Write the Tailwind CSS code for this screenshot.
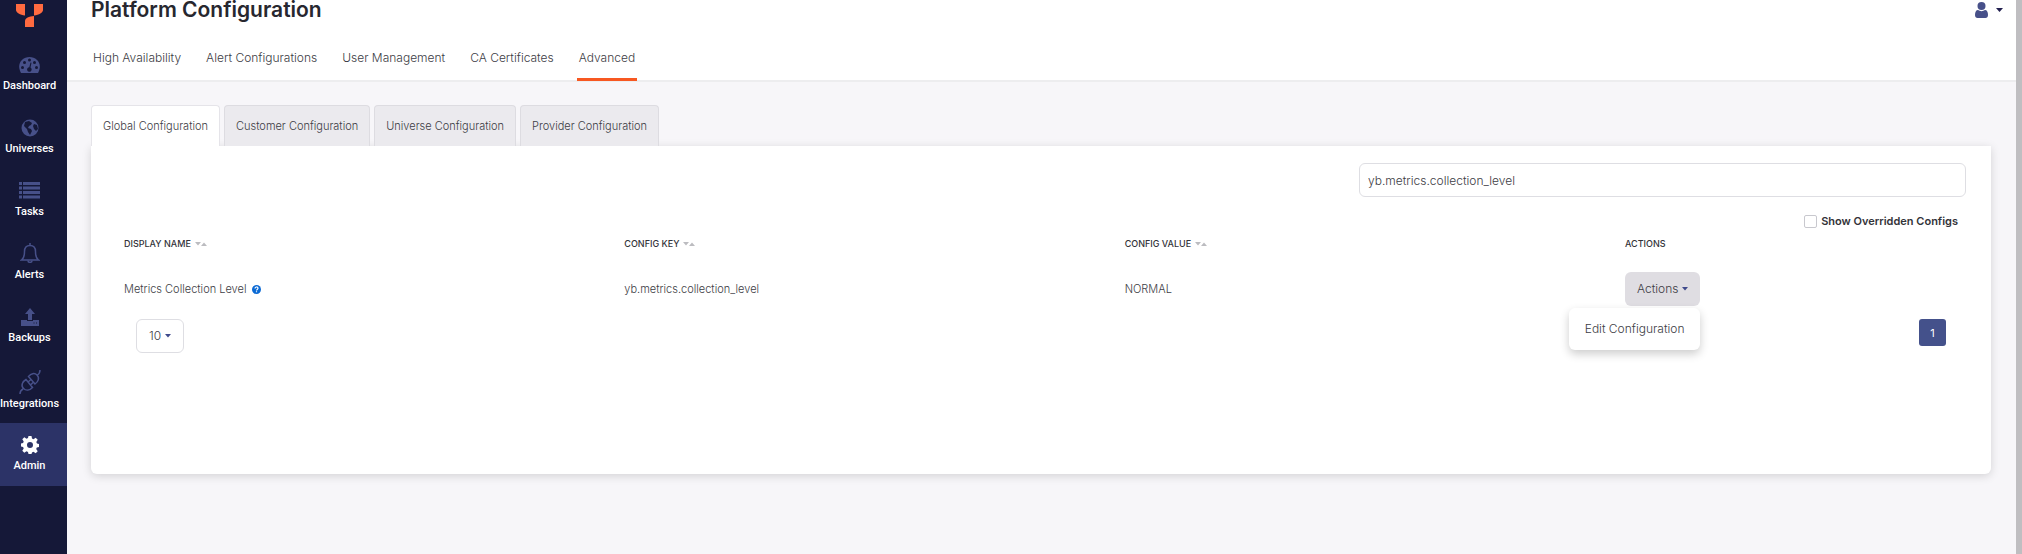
<!DOCTYPE html>
<html lang="en">

<head>
    <meta charset="UTF-8">
    <meta name="viewport" content="width=device-width, initial-scale=1.0">
    <title>Platform Configuration</title>
    <script src="https://cdn.jsdelivr.net/npm/@tailwindcss/browser@4"></script>
</head>

<body class="flex min-h-screen bg-[#f7f6f9] font-['Inter',sans-serif] text-[12px] leading-4 font-light text-[#3c3c44]">
    <!-- Sidebar -->
    <aside class="w-[67px] shrink-0 bg-[#151838] font-['Roboto',sans-serif] text-[11px] font-medium text-white">
        <a href="#" aria-label="Home" class="flex h-[43px] w-[59px] justify-center pt-1">
            <svg class="h-[23px] w-[27px]" viewBox="0 0 27 23" fill="#ff6a40">
                <path d="M0 0h9v11.500C4 11 0 8.500 0 6z" />
                <path d="M18 0h9v6c0 2.500-4 5-9 5.500z" />
                <path d="M18 12v11H9v-6c0-3 4-4.500 9-5z" />
            </svg>
        </a>
        <nav>
            <a href="#" class="flex h-[63px] flex-col pt-[13px]">
                <span class="flex w-[59px] flex-col items-center gap-1">
                    <svg class="h-[18px] w-[21px]" viewBox="0 0 21 18" fill="#475089">
                        <path d="M2 17C-3 8 3 1 10.500 1S24 8 19 17z" />
                        <g fill="#151838">
                            <circle cx="3.500" cy="11.500" r="1.500" />
                            <circle cx="5.500" cy="6.500" r="1.500" />
                            <circle cx="10.500" cy="4" r="1.500" />
                            <circle cx="15.500" cy="6.500" r="1.500" />
                            <circle cx="17.500" cy="11.500" r="1.500" />
                            <path d="M11.500 6.500l1 .3-1 4.700a2.300 2.300 0 1 1-1.200-.3z" />
                        </g>
                    </svg>
                    <span>Dashboard</span>
                </span>
            </a>
            <a href="#" class="flex h-[63px] flex-col pt-[13px]">
                <span class="flex w-[59px] flex-col items-center gap-1">
                    <svg class="size-[18px]" viewBox="0 0 18 18">
                        <circle cx="9" cy="9" r="8.500" fill="#475089" />
                        <path d="M4 3l4-1 3 2-1 2-2 1-1 2 3 1 1 2-2 4-2-3-1-3-3-3zM13 5l3 1 1 4-2 2-2-2-1-3z" fill="#151838" />
                    </svg>
                    <span>Universes</span>
                </span>
            </a>
            <a href="#" class="flex h-[63px] flex-col pt-[13px]">
                <span class="flex w-[59px] flex-col items-center gap-1">
                    <svg class="h-[18px] w-[21px]" viewBox="0 0 21 18" fill="#475089">
                        <path d="M0 0h3v3H0zM4 0h17v3H4zM0 4.500h3v3H0zM4 4.500h17v3H4zM0 9h3v3H0zM4 9h17v3H4zM0 13.500h3v3H0zM4 13.500h17v3H4z" />
                    </svg>
                    <span>Tasks</span>
                </span>
            </a>
            <a href="#" class="flex h-[63px] flex-col pt-[11px]">
                <span class="flex w-[59px] flex-col items-center gap-1">
                    <svg class="size-5" viewBox="0 0 20 20" fill="none" stroke="#475089" stroke-width="1.500">
                        <path d="M10 0v2M1.500 17c3-2 3-5 3-8.500C4.500 4.500 7 2.500 10 2.500s5.500 2 5.500 6c0 3.500 0 6.500 3 8.500z" />
                        <path d="M8 17.500c0 2.500 4 2.500 4 0" />
                    </svg>
                    <span>Alerts</span>
                </span>
            </a>
            <a href="#" class="flex h-[63px] flex-col pt-[13px]">
                <span class="flex w-[59px] flex-col items-center gap-1">
                    <svg class="size-[18px]" viewBox="0 0 18 18" fill="#475089">
                        <path d="M9 0l5 6h-3v6H7V6H4z" />
                        <path fill-rule="evenodd" d="M0 12h6v1h6v-1h6v6H0zM12.500 14.500v1h1v-1zM15 14.500v1h1v-1z" />
                    </svg>
                    <span>Backups</span>
                </span>
            </a>
            <a href="#" class="flex h-[65px] flex-col pt-3">
                <span class="flex w-[59px] flex-col items-center gap-[2px]">
                    <svg class="h-6 w-[22px]" viewBox="0 0 22 24" fill="none" stroke="#475089" stroke-width="1.500">
                        <path d="M1 24c0-3 1-4 3-5M4.500 18.500c-3-3-1-7 2.500-9l6.500 8c-3 3-6.500 3.500-9 1zM21 0c0 3-1 4-2.500 5M18 5c3 3 1 7-2 9L9.500 6.500c2.500-3 6-4 8.500-1.500zM9 12l3-2.500M11.500 15l2.500-2.500" />
                    </svg>
                    <span>Integrations</span>
                </span>
            </a>
            <a href="#" aria-current="page" class="flex h-[63px] flex-col bg-[#2c3367] pt-[13px]">
                <span class="flex w-[59px] flex-col items-center gap-1">
                    <svg class="size-[18px]" viewBox="0 0 18 18">
                        <path fill="#fff" fill-rule="evenodd" d="M7.500 0h3l.5 2.500 1.500.7 2.200-1.400 2 2-1.400 2.200.7 1.500 2 .5v3l-2.200.5-.6 1.500 1.500 2.200-2 2-2.300-1.400-1.400.6L10.500 18h-3L7 15.900l-1.500-.6-2.200 1.400-2-2 1.400-2.200-.6-1.500L0 10.500v-3L2.100 7l.6-1.500-1.400-2.200 2-2 2.200 1.400L7 2.100zM9 6a3 3 0 1 0 0 6 3 3 0 0 0 0-6z" />
                    </svg>
                    <span>Admin</span>
                </span>
            </a>
        </nav>
    </aside>

    <div class="min-w-0 flex-1">
        <header class="border-b-2 border-[#ededef] bg-white pr-[13px] pl-6">
            <div class="flex h-5 items-center justify-between">
                <h1 class="text-[21px] leading-5 font-semibold text-[#27272f]">Platform Configuration</h1>
                <button type="button" aria-label="Account" class="flex items-center gap-2">
                    <svg class="h-4 w-[13px]" viewBox="0 0 13 16" fill="#475089">
                        <circle cx="6.500" cy="4" r="4" />
                        <path d="M3 8c2 1.500 5 1.500 7 0 2 0 3 2 3 5 0 2-1 3-2.500 3h-8C1 16 0 15 0 13c0-3 1-5 3-5z" />
                    </svg>
                    <svg class="h-1 w-[7px]" viewBox="0 0 7 4" fill="#22204f"><path d="M0 0h7L3.500 4z" /></svg>
                </button>
            </div>
            <nav class="-mb-px flex gap-[21px] pt-[30px]">
                <a href="#" class="border-b-[3px] border-transparent px-[2px] pb-3">High Availability</a>
                <a href="#" class="border-b-[3px] border-transparent px-[2px] pb-3">Alert Configurations</a>
                <a href="#" class="border-b-[3px] border-transparent px-[2px] pb-3">User Management</a>
                <a href="#" class="border-b-[3px] border-transparent px-[2px] pb-3">CA Certificates</a>
                <a href="#" aria-current="page" class="border-b-[3px] border-[#f75821] px-[2px] pb-3">Advanced</a>
            </nav>
        </header>

        <main class="pt-[23px] pr-[25px] pb-6 pl-6">
            <div role="tablist" class="flex gap-1 text-[11px]">
                <button type="button" role="tab" aria-selected="true" class="h-[41px] rounded-t border border-b-0 border-[#e5e4e9] bg-white px-[11px]">Global Configuration</button>
                <button type="button" role="tab" aria-selected="false" class="h-[41px] rounded-t border border-b-0 border-[#dddce1] bg-[#ebeaee] px-[11px]">Customer Configuration</button>
                <button type="button" role="tab" aria-selected="false" class="h-[41px] rounded-t border border-b-0 border-[#dddce1] bg-[#ebeaee] px-[11px]">Universe Configuration</button>
                <button type="button" role="tab" aria-selected="false" class="h-[41px] rounded-t border border-b-0 border-[#dddce1] bg-[#ebeaee] px-[11px]">Provider Configuration</button>
            </div>

            <section class="min-h-[328px] rounded-b-md bg-white px-[25px] pt-[17px] shadow-[0_2px_10px_rgba(0,0,0,0.15)]">
                <div class="flex justify-end">
                    <input type="text" aria-label="Search" value="yb.metrics.collection_level" class="h-[34px] w-[607px] rounded-md border border-[#dedee3] bg-white px-2 text-[12px]">
                </div>
                <div class="mt-4 flex justify-end pr-2">
                    <label class="flex items-center gap-1 text-[11px] font-semibold text-[#333339]">
                        <input type="checkbox" class="size-[13px] appearance-none rounded-xs border border-[#c8c8ce] bg-white">
                        Show Overridden Configs
                    </label>
                </div>

                <table class="w-full table-fixed text-left text-[11px]">
                    <thead>
                        <tr class="h-[30px] text-[9px] text-[#333339]">
                            <th class="px-2 font-medium">
                                <span class="flex items-center gap-1">DISPLAY NAME
                                    <svg class="h-1 w-3" viewBox="0 0 12 4" fill="#bcbcc0"><path d="M0 0h6L3 3.500zM6 4h6L9 .5z" /></svg>
                                </span>
                            </th>
                            <th class="px-2 font-medium">
                                <span class="flex items-center gap-1">CONFIG KEY
                                    <svg class="h-1 w-3" viewBox="0 0 12 4" fill="#bcbcc0"><path d="M0 0h6L3 3.500zM6 4h6L9 .5z" /></svg>
                                </span>
                            </th>
                            <th class="px-2 font-medium">
                                <span class="flex items-center gap-1">CONFIG VALUE
                                    <svg class="h-1 w-3" viewBox="0 0 12 4" fill="#bcbcc0"><path d="M0 0h6L3 3.500zM6 4h6L9 .5z" /></svg>
                                </span>
                            </th>
                            <th class="w-[349px] px-2 font-medium">ACTIONS</th>
                        </tr>
                    </thead>
                    <tbody>
                        <tr class="h-[60px]">
                            <td class="px-2">
                                <span class="flex items-center gap-[6px]">Metrics Collection Level
                                    <svg class="size-[9px]" viewBox="0 0 9 9" fill="none">
                                        <circle cx="4.500" cy="4.500" r="4.500" fill="#0a69d4" />
                                        <path d="M3 3.500c0-2 3-2 3-.2C6 4.500 4.500 4.300 4.500 5.500M4.500 6.300v1" stroke="#fff" stroke-width="1.200" />
                                    </svg>
                                </span>
                            </td>
                            <td class="px-2">yb.metrics.collection_level</td>
                            <td class="px-2">NORMAL</td>
                            <td class="px-2">
                                <div class="relative inline-block align-middle">
                                    <button type="button" aria-expanded="true" class="flex h-[34px] items-center gap-1 rounded-md bg-[#dfdde2] px-3 text-[12px]">
                                        Actions
                                        <svg class="h-1 w-[6px]" viewBox="0 0 6 4" fill="#3f4a8c"><path d="M0 0h6L3 3.500z" /></svg>
                                    </button>
                                    <div class="absolute top-full right-0 mt-[2px] rounded-md bg-white px-4 py-[13px] whitespace-nowrap shadow-[0_4px_10px_rgba(0,0,0,0.2)]">
                                        <a href="#" class="block text-[12px] leading-4">Edit Configuration</a>
                                    </div>
                                </div>
                            </td>
                        </tr>
                    </tbody>
                </table>

                <div class="flex items-start justify-between pr-5 pl-5">
                    <button type="button" aria-label="Rows per page" class="flex h-[34px] w-12 items-center justify-center gap-1 rounded-md border border-[#dedee3]">
                        10
                        <svg class="h-1 w-[6px]" viewBox="0 0 6 4" fill="#3f4a8c"><path d="M0 0h6L3 3.500z" /></svg>
                    </button>
                    <button type="button" aria-label="Page 1" class="h-[27px] w-[27px] rounded-[3px] bg-[#44518b] text-[11px] font-normal text-white">1</button>
                </div>
            </section>
        </main>
    </div>

    <!-- Scroll track -->
    <div class="w-[6px] shrink-0 bg-[#bfbec1]"></div>
</body>

</html>
